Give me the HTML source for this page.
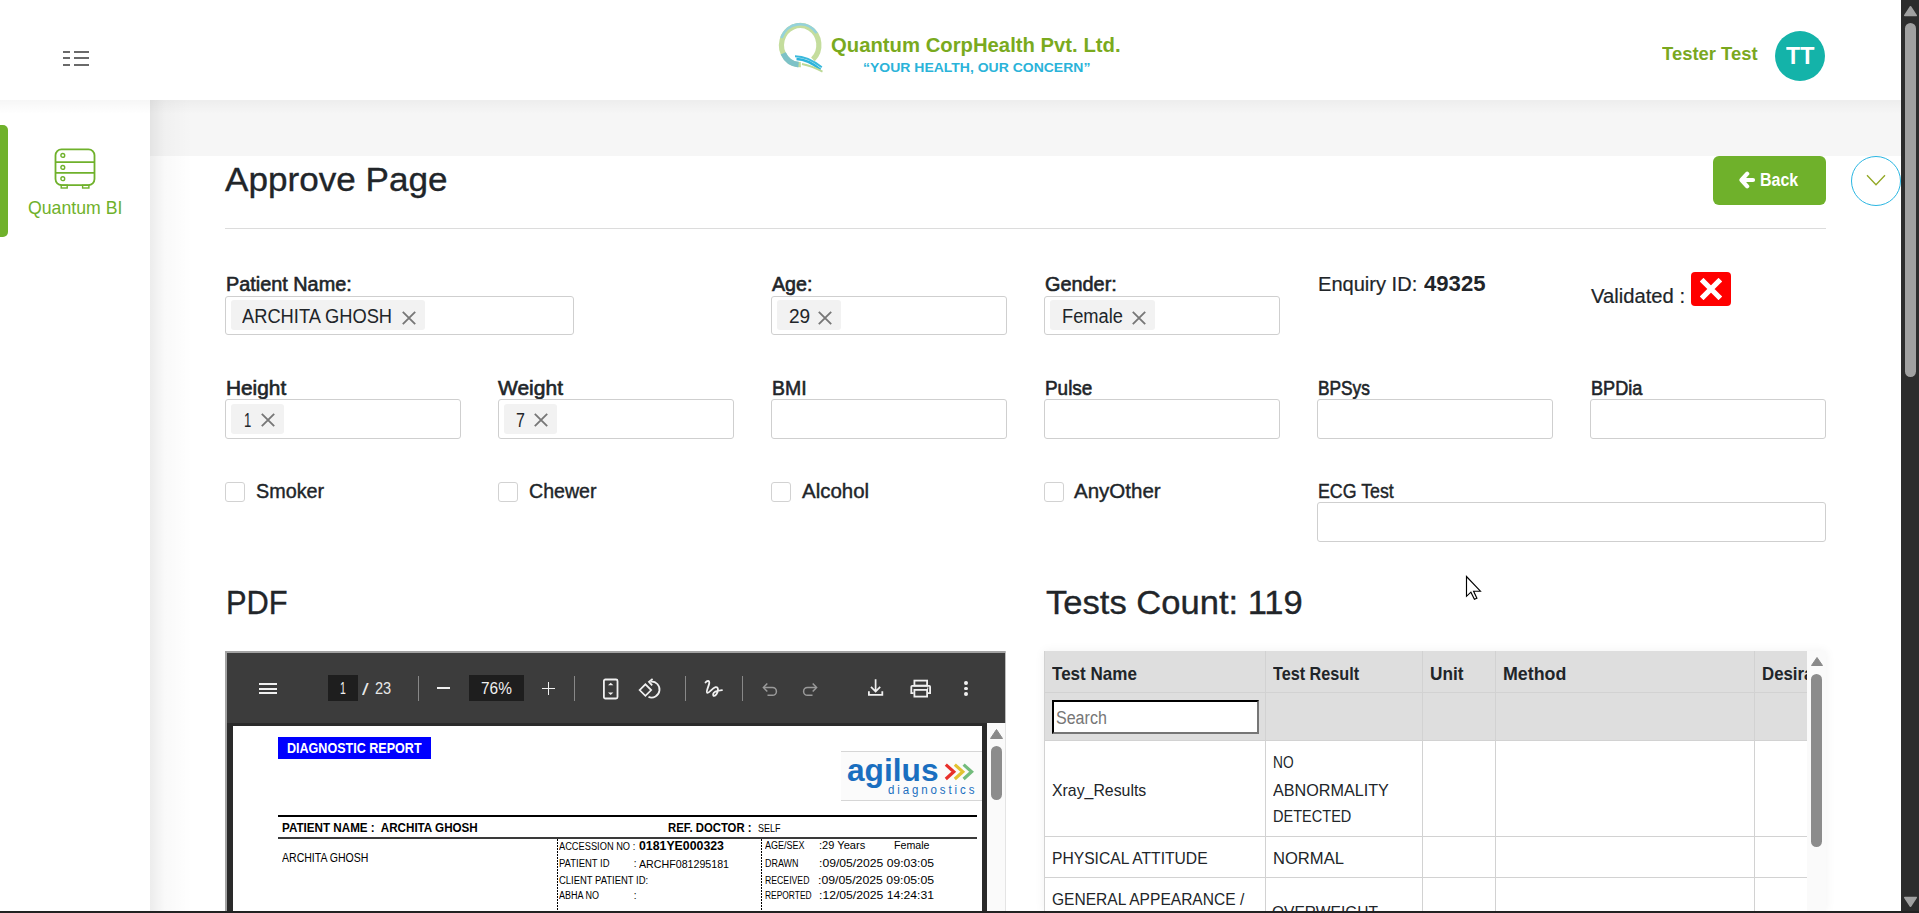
<!DOCTYPE html>
<html><head><meta charset="utf-8"><title>Approve Page</title>
<style>
html,body{margin:0;padding:0;width:1919px;height:913px;overflow:hidden;background:#fff;}
body{position:relative;font-family:"Liberation Sans",sans-serif;}
.t{position:absolute;white-space:nowrap;transform-origin:0 0;font-family:"Liberation Sans",sans-serif;}
.b{position:absolute;display:block;}
</style></head><body>
<div class="b" style="left:150px;top:100px;width:1751px;height:56px;background:#f6f6f6;"></div>
<div class="b" style="left:150px;top:156px;width:1751px;height:755px;background:#fff;"></div>
<div class="b" style="left:0px;top:0px;width:1901px;height:100px;background:#fff;"></div>
<div class="b" style="left:63px;top:51px;width:7px;height:2px;background:#6a6a6a;"></div>
<div class="b" style="left:74px;top:51px;width:15px;height:2px;background:#6a6a6a;"></div>
<div class="b" style="left:63px;top:57px;width:7px;height:2px;background:#6a6a6a;"></div>
<div class="b" style="left:74px;top:57px;width:15px;height:2px;background:#6a6a6a;"></div>
<div class="b" style="left:63px;top:64px;width:7px;height:2px;background:#6a6a6a;"></div>
<div class="b" style="left:74px;top:64px;width:15px;height:2px;background:#6a6a6a;"></div>
<svg class="b" style="left:774px;top:19px" width="56" height="58" viewBox="0 0 56 58">
<path d="M26.85 45.69 A18.70 19.60 0 1 1 38.95 40.43" fill="none" stroke="#c4dd9d" stroke-width="5.2"/>
<path d="M7.41 18.95 A20.00 20.90 0 0 1 42.58 14.11" fill="none" stroke="#94d2db" stroke-width="2.6"/>
<path d="M24.57 45.63 A18.70 19.60 0 0 1 9.25 34.38" fill="none" stroke="#7dc2c7" stroke-width="5.6"/>
<path d="M21 37.2 Q34 37.2 47.8 48.3" fill="none" stroke="#3ab9dc" stroke-width="1.9"/>
<path d="M22.5 40 Q34 40.3 46.5 50.6" fill="none" stroke="#2cb3da" stroke-width="2.3"/>
<path d="M28 45 Q38 47 48.5 52.6" fill="none" stroke="#bcd996" stroke-width="1.8"/>
</svg>
<div class="t" style="left:830.60px;top:34.6px;font-size:20px;line-height:20px;font-weight:bold;color:#7aaa1e;transform:scaleX(1.0140);">Quantum CorpHealth Pvt. Ltd.</div>
<div class="t" style="left:862.70px;top:61.2px;font-size:13px;line-height:13px;font-weight:bold;color:#2ab3d9;transform:scaleX(1.0758);">“YOUR HEALTH, OUR CONCERN”</div>
<div class="t" style="left:1661.70px;top:44.4px;font-size:19px;line-height:19px;font-weight:bold;color:#7aa81f;transform:scaleX(0.9697);">Tester Test</div>
<div class="b" style="left:1775px;top:31px;width:50px;height:50px;background:#14b3a9;border-radius:50%;"></div>
<div class="t" style="left:1785.50px;top:44.400000000000006px;font-size:24px;line-height:24px;font-weight:bold;color:#ffffff;transform:scaleX(0.9667);">TT</div>
<div class="b" style="left:0px;top:100px;width:150px;height:811px;background:#fff;"></div>
<div class="b" style="left:0px;top:125px;width:8px;height:112px;background:#6fb12b;border-radius:0 5px 5px 0;"></div>
<svg class="b" style="left:54px;top:148px" width="42" height="42" viewBox="0 0 42 42">
<rect x="1.5" y="1.3" width="39" height="35.8" rx="6" fill="none" stroke="#6fb12b" stroke-width="1.8"/>
<line x1="1.5" y1="14.1" x2="40.5" y2="14.1" stroke="#6fb12b" stroke-width="1.8"/>
<line x1="1.5" y1="24.8" x2="40.5" y2="24.8" stroke="#6fb12b" stroke-width="1.8"/>
<circle cx="8.8" cy="7.4" r="1.9" fill="none" stroke="#6fb12b" stroke-width="1.4"/>
<circle cx="8.8" cy="19.4" r="1.9" fill="none" stroke="#6fb12b" stroke-width="1.4"/>
<circle cx="8.8" cy="30.7" r="1.9" fill="none" stroke="#6fb12b" stroke-width="1.4"/>
<rect x="7.2" y="37.2" width="6" height="2.8" fill="none" stroke="#6fb12b" stroke-width="1.4"/>
<rect x="28.6" y="37.2" width="6.3" height="2.8" fill="none" stroke="#6fb12b" stroke-width="1.4"/>
</svg>
<div class="t" style="left:28.00px;top:198px;font-size:19px;line-height:19px;font-weight:normal;color:#6fb12b;transform:scaleX(0.9307);">Quantum BI</div>
<div class="b" style="left:150px;top:100px;width:42px;height:811px;background:linear-gradient(90deg,rgba(0,0,0,0.075),rgba(0,0,0,0.025) 35%,rgba(0,0,0,0) 100%);"></div>
<div class="b" style="left:0px;top:100px;width:1901px;height:14px;background:linear-gradient(180deg,rgba(0,0,0,0.035),rgba(0,0,0,0));"></div>
<div class="t" style="left:225.40px;top:161.8px;font-size:34px;line-height:34px;font-weight:normal;color:#212529;transform:scaleX(1.0326);-webkit-text-stroke:0.35px #212529;">Approve Page</div>
<div class="b" style="left:225px;top:228px;width:1601px;height:1px;background:#dcdcdc;"></div>
<div class="b" style="left:1713px;top:156px;width:113px;height:49px;background:#6fb12b;border-radius:6px;"></div>
<svg class="b" style="left:1737px;top:171px" width="20" height="18" viewBox="0 0 20 18">
<path d="M10.2 2.7 L4.5 9 L10.2 15.3 M5 9 H16" fill="none" stroke="#fff" stroke-width="4.2" stroke-linecap="round" stroke-linejoin="round"/></svg>
<div class="t" style="left:1760.30px;top:171.2px;font-size:18px;line-height:18px;font-weight:bold;color:#ffffff;transform:scaleX(0.8886);">Back</div>
<div class="b" style="left:1851px;top:156px;width:50px;height:50px;border:1px solid #2ab6e2;border-radius:50%;box-sizing:border-box;"></div>
<svg class="b" style="left:1864px;top:172px" width="24" height="16" viewBox="0 0 24 16">
<path d="M3 3.3 L12 12.8 L21 3.3" fill="none" stroke="#93a825" stroke-width="1.3"/></svg>
<div class="t" style="left:226.30px;top:273.9px;font-size:20px;line-height:20px;font-weight:normal;color:#212529;transform:scaleX(0.9921);-webkit-text-stroke:0.6px #212529;">Patient Name:</div>
<div class="t" style="left:771.70px;top:273.9px;font-size:20px;line-height:20px;font-weight:normal;color:#212529;transform:scaleX(0.9829);-webkit-text-stroke:0.6px #212529;">Age:</div>
<div class="t" style="left:1044.50px;top:273.9px;font-size:20px;line-height:20px;font-weight:normal;color:#212529;transform:scaleX(0.9931);-webkit-text-stroke:0.6px #212529;">Gender:</div>
<div class="t" style="left:1318.00px;top:273.9px;font-size:20px;line-height:20px;font-weight:normal;color:#212529;transform:scaleX(1.0030);-webkit-text-stroke:0.2px #212529;">Enquiry ID:</div>
<div class="t" style="left:1424.00px;top:272.9px;font-size:22px;line-height:22px;font-weight:bold;color:#212529;transform:scaleX(1.0049);">49325</div>
<div class="t" style="left:1591.20px;top:286.1px;font-size:20px;line-height:20px;font-weight:normal;color:#212529;transform:scaleX(1.0108);-webkit-text-stroke:0.2px #212529;">Validated :</div>
<div class="b" style="left:1691px;top:272px;width:40px;height:34px;background:#ff0000;border-radius:4px;"></div>
<svg class="b" style="left:1700px;top:278px" width="22" height="22" viewBox="0 0 22 22">
<path d="M3.5 3.5 L18.5 18.5 M18.5 3.5 L3.5 18.5" stroke="#fff" stroke-width="5.2" stroke-linecap="square"/></svg>
<div class="b" style="left:225px;top:296px;width:349px;height:39px;border:1px solid #cfcfcf;border-radius:3px;box-sizing:border-box;background:#fff;"></div>
<div class="b" style="left:771px;top:296px;width:236px;height:39px;border:1px solid #cfcfcf;border-radius:3px;box-sizing:border-box;background:#fff;"></div>
<div class="b" style="left:1044px;top:296px;width:236px;height:39px;border:1px solid #cfcfcf;border-radius:3px;box-sizing:border-box;background:#fff;"></div>
<div class="b" style="left:231px;top:300px;width:194px;height:30px;background:#f2f2f2;border-radius:3px;"></div>
<div class="t" style="left:242.40px;top:306px;font-size:20px;line-height:20px;font-weight:normal;color:#212529;transform:scaleX(0.9146);">ARCHITA GHOSH</div>
<svg class="b" style="left:402px;top:311px" width="14" height="14" viewBox="0 0 14 14"><path d="M0.8 0.8 L13.2 13.2 M13.2 0.8 L0.8 13.2" stroke="#777" stroke-width="1.85"/></svg>
<div class="b" style="left:777px;top:300px;width:64px;height:30px;background:#f2f2f2;border-radius:3px;"></div>
<div class="t" style="left:788.60px;top:306px;font-size:20px;line-height:20px;font-weight:normal;color:#212529;transform:scaleX(0.9545);">29</div>
<svg class="b" style="left:818px;top:311px" width="14" height="14" viewBox="0 0 14 14"><path d="M0.8 0.8 L13.2 13.2 M13.2 0.8 L0.8 13.2" stroke="#777" stroke-width="1.85"/></svg>
<div class="b" style="left:1050px;top:300px;width:105px;height:30px;background:#f2f2f2;border-radius:3px;"></div>
<div class="t" style="left:1062.00px;top:306px;font-size:20px;line-height:20px;font-weight:normal;color:#212529;transform:scaleX(0.9149);">Female</div>
<svg class="b" style="left:1132px;top:311px" width="14" height="14" viewBox="0 0 14 14"><path d="M0.8 0.8 L13.2 13.2 M13.2 0.8 L0.8 13.2" stroke="#777" stroke-width="1.85"/></svg>
<div class="t" style="left:225.70px;top:378px;font-size:20px;line-height:20px;font-weight:normal;color:#212529;transform:scaleX(1.0414);-webkit-text-stroke:0.6px #212529;">Height</div>
<div class="t" style="left:498.20px;top:378px;font-size:20px;line-height:20px;font-weight:normal;color:#212529;transform:scaleX(1.0500);-webkit-text-stroke:0.6px #212529;">Weight</div>
<div class="t" style="left:771.70px;top:378px;font-size:20px;line-height:20px;font-weight:normal;color:#212529;transform:scaleX(0.9722);-webkit-text-stroke:0.6px #212529;">BMI</div>
<div class="t" style="left:1044.50px;top:378px;font-size:20px;line-height:20px;font-weight:normal;color:#212529;transform:scaleX(0.9460);-webkit-text-stroke:0.6px #212529;">Pulse</div>
<div class="t" style="left:1318.10px;top:378px;font-size:20px;line-height:20px;font-weight:normal;color:#212529;transform:scaleX(0.8650);-webkit-text-stroke:0.6px #212529;">BPSys</div>
<div class="t" style="left:1591.20px;top:378px;font-size:20px;line-height:20px;font-weight:normal;color:#212529;transform:scaleX(0.9052);-webkit-text-stroke:0.6px #212529;">BPDia</div>
<div class="b" style="left:225px;top:399px;width:236px;height:40px;border:1px solid #cfcfcf;border-radius:3px;box-sizing:border-box;background:#fff;"></div>
<div class="b" style="left:498px;top:399px;width:236px;height:40px;border:1px solid #cfcfcf;border-radius:3px;box-sizing:border-box;background:#fff;"></div>
<div class="b" style="left:771px;top:399px;width:236px;height:40px;border:1px solid #cfcfcf;border-radius:3px;box-sizing:border-box;background:#fff;"></div>
<div class="b" style="left:1044px;top:399px;width:236px;height:40px;border:1px solid #cfcfcf;border-radius:3px;box-sizing:border-box;background:#fff;"></div>
<div class="b" style="left:1317px;top:399px;width:236px;height:40px;border:1px solid #cfcfcf;border-radius:3px;box-sizing:border-box;background:#fff;"></div>
<div class="b" style="left:1590px;top:399px;width:236px;height:40px;border:1px solid #cfcfcf;border-radius:3px;box-sizing:border-box;background:#fff;"></div>
<div class="b" style="left:231px;top:404px;width:53px;height:30px;background:#f2f2f2;border-radius:3px;"></div>
<div class="t" style="left:243.80px;top:409.5px;font-size:20px;line-height:20px;font-weight:normal;color:#212529;transform:scaleX(0.6545);">1</div>
<svg class="b" style="left:261px;top:413px" width="14" height="14" viewBox="0 0 14 14"><path d="M0.8 0.8 L13.2 13.2 M13.2 0.8 L0.8 13.2" stroke="#777" stroke-width="1.85"/></svg>
<div class="b" style="left:504px;top:404px;width:53px;height:30px;background:#f2f2f2;border-radius:3px;"></div>
<div class="t" style="left:515.70px;top:409.5px;font-size:20px;line-height:20px;font-weight:normal;color:#212529;transform:scaleX(0.8000);">7</div>
<svg class="b" style="left:534px;top:413px" width="14" height="14" viewBox="0 0 14 14"><path d="M0.8 0.8 L13.2 13.2 M13.2 0.8 L0.8 13.2" stroke="#777" stroke-width="1.85"/></svg>
<div class="b" style="left:225px;top:482px;width:20px;height:20px;border:1.5px solid #d2d2d2;border-radius:3px;box-sizing:border-box;"></div>
<div class="t" style="left:255.60px;top:480.7px;font-size:20px;line-height:20px;font-weight:normal;color:#212529;transform:scaleX(0.9884);-webkit-text-stroke:0.4px #212529;">Smoker</div>
<div class="b" style="left:498px;top:482px;width:20px;height:20px;border:1.5px solid #d2d2d2;border-radius:3px;box-sizing:border-box;"></div>
<div class="t" style="left:528.50px;top:480.7px;font-size:20px;line-height:20px;font-weight:normal;color:#212529;transform:scaleX(0.9783);-webkit-text-stroke:0.4px #212529;">Chewer</div>
<div class="b" style="left:771px;top:482px;width:20px;height:20px;border:1.5px solid #d2d2d2;border-radius:3px;box-sizing:border-box;"></div>
<div class="t" style="left:801.50px;top:480.7px;font-size:20px;line-height:20px;font-weight:normal;color:#212529;transform:scaleX(1.0227);-webkit-text-stroke:0.4px #212529;">Alcohol</div>
<div class="b" style="left:1044px;top:482px;width:20px;height:20px;border:1.5px solid #d2d2d2;border-radius:3px;box-sizing:border-box;"></div>
<div class="t" style="left:1074.20px;top:480.7px;font-size:20px;line-height:20px;font-weight:normal;color:#212529;transform:scaleX(1.0259);-webkit-text-stroke:0.4px #212529;">AnyOther</div>
<div class="t" style="left:1317.50px;top:481.3px;font-size:20px;line-height:20px;font-weight:normal;color:#212529;transform:scaleX(0.8895);-webkit-text-stroke:0.4px #212529;">ECG Test</div>
<div class="b" style="left:1317px;top:502px;width:509px;height:40px;border:1px solid #cfcfcf;border-radius:3px;box-sizing:border-box;background:#fff;"></div>
<div class="t" style="left:225.80px;top:584.8px;font-size:34px;line-height:34px;font-weight:normal;color:#212529;transform:scaleX(0.9074);-webkit-text-stroke:0.35px #212529;">PDF</div>
<div class="t" style="left:1045.50px;top:584.8px;font-size:34px;line-height:34px;font-weight:normal;color:#212529;transform:scaleX(1.0166);-webkit-text-stroke:0.35px #212529;">Tests Count: 119</div>
<svg class="b" style="left:1464px;top:574px" width="22" height="30" viewBox="0 0 22 30">
<path d="M2.5 2.5 L2.5 22.3 L6.9 18.2 L10.4 25.3 L12.9 24.2 L9.6 17.2 L16.4 17.2 Z" fill="#fff" stroke="#000" stroke-width="1.15" stroke-linejoin="miter"/></svg>
<div class="b" style="left:225px;top:651px;width:781px;height:260px;background:#2a2a2a;"></div>
<div class="b" style="left:225px;top:651px;width:781px;height:2px;background:#a3a3a3;"></div>
<div class="b" style="left:225px;top:651px;width:2px;height:260px;background:#a3a3a3;"></div>
<div class="b" style="left:1005px;top:651px;width:1px;height:72px;background:#bdbdbd;"></div>
<div class="b" style="left:227px;top:653px;width:778px;height:70px;background:#3c3c3c;"></div>
<div class="b" style="left:987px;top:723px;width:18px;height:188px;background:#fafafa;"></div>
<div class="b" style="left:1005px;top:723px;width:1px;height:188px;background:#e4e4e4;"></div>
<div class="b" style="left:258.6px;top:683px;width:18px;height:1.9px;background:#f0f0f0"></div>
<div class="b" style="left:258.6px;top:687.7px;width:18px;height:1.9px;background:#f0f0f0"></div>
<div class="b" style="left:258.6px;top:692.3px;width:18px;height:1.9px;background:#f0f0f0"></div>
<div class="b" style="left:328px;top:675px;width:30px;height:26px;background:#1e1e1e;"></div>
<div class="t" style="left:339.90px;top:681.2px;font-size:16px;line-height:16px;font-weight:normal;color:#f0f0f0;transform:scaleX(0.6556);">1</div>
<div class="t" style="left:361.80px;top:681.6px;font-size:16px;line-height:16px;font-weight:normal;color:#e8e8e8;transform:scaleX(1.4800);">/</div>
<div class="t" style="left:374.70px;top:681.2px;font-size:16px;line-height:16px;font-weight:normal;color:#e8e8e8;transform:scaleX(0.9111);">23</div>
<div class="b" style="left:418px;top:676px;width:1px;height:25px;background:#888;"></div>
<div class="b" style="left:437px;top:687.2px;width:13px;height:1.8px;background:#f0f0f0"></div>
<div class="b" style="left:469px;top:675px;width:55px;height:26px;background:#1e1e1e;"></div>
<div class="t" style="left:481.30px;top:681.2px;font-size:16px;line-height:16px;font-weight:normal;color:#f0f0f0;transform:scaleX(0.9625);">76%</div>
<div class="b" style="left:542px;top:687.6px;width:13px;height:1.8px;background:#f0f0f0"></div>
<div class="b" style="left:547.6px;top:682px;width:1.8px;height:13px;background:#f0f0f0"></div>
<div class="b" style="left:574px;top:676px;width:1px;height:25px;background:#888;"></div>
<svg class="b" style="left:602px;top:678px" width="18" height="22" viewBox="0 0 18 22"><rect x="1.9" y="1.5" width="13.6" height="19" rx="1.5" fill="none" stroke="#f0f0f0" stroke-width="1.8"/><path d="M6 7.2 L8.7 4.8 L11.4 7.2 Z M6 14.5 L8.7 17 L11.4 14.5 Z" fill="#f0f0f0"/></svg>
<svg class="b" style="left:638px;top:677px" width="24" height="24" viewBox="0 0 24 24"><path d="M1.6 13.1 L7.4 7.3 L13.2 13.1 L7.4 18.9 Z" fill="none" stroke="#f0f0f0" stroke-width="1.7"/><path d="M12.8 4.53 A8 8 0 1 1 10.5 19.9" fill="none" stroke="#f0f0f0" stroke-width="1.8"/><path d="M14.6 1.9 L11 4.9 L14.2 8.3" fill="none" stroke="#f0f0f0" stroke-width="1.8"/></svg>
<div class="b" style="left:685px;top:676px;width:1px;height:25px;background:#888;"></div>
<svg class="b" style="left:703px;top:678px" width="22" height="22" viewBox="0 0 22 22"><path d="M2.5 4.6 C4 2.4 6.8 2.2 6.2 5.5 C5.6 9 2.6 13.5 4.2 14.8 C5.8 16 9 10.2 12.5 9.2 C15.5 8.4 15.6 13 13.6 16 C12 18.4 9.8 18.6 10.2 16 C10.6 13.2 15 12.6 19 12.2" fill="none" stroke="#f0f0f0" stroke-width="1.8" stroke-linecap="round" stroke-linejoin="round"/></svg>
<div class="b" style="left:742px;top:676px;width:1px;height:25px;background:#888;"></div>
<svg class="b" style="left:761px;top:680px" width="20" height="18" viewBox="0 0 20 18"><path d="M3 7.5 H11.5 A3.9 3.9 0 0 1 11.5 15.3 H6.5" fill="none" stroke="#9a9a9a" stroke-width="1.5"/><path d="M6.3 3.4 L2.4 7.5 L6.3 11.6" fill="none" stroke="#9a9a9a" stroke-width="1.5"/></svg>
<svg class="b" style="left:799px;top:680px" width="20" height="18" viewBox="0 0 20 18"><path d="M17 7.5 H8.5 A3.9 3.9 0 0 0 8.5 15.3 H13.5" fill="none" stroke="#9a9a9a" stroke-width="1.5"/><path d="M13.7 3.4 L17.6 7.5 L13.7 11.6" fill="none" stroke="#9a9a9a" stroke-width="1.5"/></svg>
<svg class="b" style="left:866px;top:678px" width="20" height="20" viewBox="0 0 20 20"><path d="M9.6 1.2 V13.4 M5 8.9 L9.6 13.5 L14.2 8.9" fill="none" stroke="#f0f0f0" stroke-width="1.7"/><path d="M2.9 13.3 V16.9 H16.3 V13.3" fill="none" stroke="#f0f0f0" stroke-width="1.8"/></svg>
<svg class="b" style="left:909px;top:677px" width="24" height="22" viewBox="0 0 24 22"><rect x="5.4" y="3.6" width="12.7" height="5" fill="none" stroke="#f0f0f0" stroke-width="1.8"/><path d="M4.6 16.1 H2.3 V9.8 Q2.3 8.9 3.2 8.9 H20.2 Q21.1 8.9 21.1 9.8 V16.1 H18.8" fill="none" stroke="#f0f0f0" stroke-width="1.8"/><rect x="5.4" y="12.9" width="12.7" height="6.7" fill="none" stroke="#f0f0f0" stroke-width="1.8"/><rect x="18" y="10.5" width="1.3" height="1.3" fill="#f0f0f0"/></svg>
<div class="b" style="left:963.9px;top:680.9px;width:3.8px;height:3.8px;border-radius:50%;background:#f0f0f0"></div>
<div class="b" style="left:963.9px;top:686.7px;width:3.8px;height:3.8px;border-radius:50%;background:#f0f0f0"></div>
<div class="b" style="left:963.9px;top:692.4px;width:3.8px;height:3.8px;border-radius:50%;background:#f0f0f0"></div>
<svg class="b" style="left:989px;top:728px" width="16" height="12" viewBox="0 0 16 12"><path d="M1.5 10.5 L7.5 1.5 L13.5 10.5 Z" fill="#8a8a8a" stroke="#8a8a8a" stroke-width="1" stroke-linejoin="round"/></svg>
<div class="b" style="left:991px;top:746px;width:11px;height:54px;background:#8c8c8c;border-radius:6px;"></div>
<div class="b" style="left:233px;top:726px;width:749px;height:185px;background:#fff;"></div>
<div class="b" style="left:278px;top:737px;width:153px;height:22px;background:#0000ff;"></div>
<div class="t" style="left:286.90px;top:739.7px;font-size:15px;line-height:15px;font-weight:bold;color:#ffffff;transform:scaleX(0.8366);">DIAGNOSTIC REPORT</div>
<div class="b" style="left:841px;top:751px;width:141px;height:50px;background:#fbfbfb;"></div>
<div class="b" style="left:841px;top:751px;width:141px;height:1px;background:#d6d6d6;"></div>
<div class="b" style="left:841px;top:800px;width:141px;height:1px;background:#d6d6d6;"></div>
<div class="t" style="left:846.70px;top:754.4px;font-size:32px;line-height:32px;font-weight:bold;color:#1a6fc0;transform:scaleX(0.9902);">agilus</div>
<svg class="b" style="left:943px;top:762px" width="33" height="20" viewBox="0 0 33 20"><path d="M2.8 2.6 L10.8 9.8 L2.8 17" fill="none" stroke="#e8302a" stroke-width="3.2"/><path d="M11.8 2.6 L19.8 9.8 L11.8 17" fill="none" stroke="#e2c232" stroke-width="3.2"/><path d="M20.6 2.6 L28.6 9.8 L20.6 17" fill="none" stroke="#73bc7c" stroke-width="3.2"/></svg>
<div class="t" style="left:888.20px;top:784.4px;font-size:12px;line-height:12px;font-weight:normal;color:#1a6fc0;transform:scaleX(0.9600);letter-spacing:3px;">diagnostics</div>
<div class="b" style="left:278px;top:815px;width:699px;height:2px;background:#000;"></div>
<div class="t" style="left:282.20px;top:822.2px;font-size:12px;line-height:12px;font-weight:bold;color:#000;transform:scaleX(0.9703);white-space:pre;">PATIENT NAME :  ARCHITA GHOSH</div>
<div class="t" style="left:668.10px;top:822.2px;font-size:12px;line-height:12px;font-weight:bold;color:#000;transform:scaleX(0.9443);">REF. DOCTOR :</div>
<div class="t" style="left:757.60px;top:822.5px;font-size:11px;line-height:11px;font-weight:normal;color:#000;transform:scaleX(0.8179);">SELF</div>
<div class="b" style="left:278px;top:837px;width:699px;height:2px;background:#3a3a3a;"></div>
<div class="t" style="left:282.20px;top:852.2px;font-size:12px;line-height:12px;font-weight:normal;color:#000;transform:scaleX(0.8776);">ARCHITA GHOSH</div>
<div class="b" style="left:557px;top:839px;width:1px;height:72px;background:repeating-linear-gradient(180deg,#000 0 2px,transparent 2px 3px);"></div>
<div class="b" style="left:761px;top:839px;width:1px;height:72px;background:repeating-linear-gradient(180deg,#000 0 2px,transparent 2px 3px);"></div>
<div class="t" style="left:558.50px;top:841.5px;font-size:10px;line-height:10px;font-weight:normal;color:#000;transform:scaleX(0.9268);">ACCESSION NO :</div>
<div class="t" style="left:639.00px;top:839.6px;font-size:12px;line-height:12px;font-weight:bold;color:#000;transform:scaleX(1.0265);">0181YE000323</div>
<div class="t" style="left:558.50px;top:858.6px;font-size:10px;line-height:10px;font-weight:normal;color:#000;transform:scaleX(0.9472);">PATIENT ID</div>
<div class="t" style="left:633.80px;top:858.6px;font-size:10px;line-height:10px;font-weight:normal;color:#000;">:</div>
<div class="t" style="left:639.00px;top:859px;font-size:11px;line-height:11px;font-weight:normal;color:#000;transform:scaleX(0.9688);">ARCHF081295181</div>
<div class="t" style="left:558.50px;top:876.2px;font-size:10px;line-height:10px;font-weight:normal;color:#000;transform:scaleX(0.9457);">CLIENT PATIENT ID:</div>
<div class="t" style="left:558.50px;top:891.2px;font-size:10px;line-height:10px;font-weight:normal;color:#000;transform:scaleX(0.9000);">ABHA NO</div>
<div class="t" style="left:633.80px;top:891.2px;font-size:10px;line-height:10px;font-weight:normal;color:#000;">:</div>
<div class="t" style="left:765.00px;top:841px;font-size:10px;line-height:10px;font-weight:normal;color:#000;transform:scaleX(0.9000);">AGE/SEX</div>
<div class="t" style="left:818.70px;top:840px;font-size:11px;line-height:11px;font-weight:normal;color:#000;transform:scaleX(1.0065);">:29 Years</div>
<div class="t" style="left:893.50px;top:840px;font-size:11px;line-height:11px;font-weight:normal;color:#000;transform:scaleX(0.9676);">Female</div>
<div class="t" style="left:765.00px;top:858.6px;font-size:10px;line-height:10px;font-weight:normal;color:#000;transform:scaleX(0.8946);">DRAWN</div>
<div class="t" style="left:818.70px;top:857.6px;font-size:11px;line-height:11px;font-weight:normal;color:#000;transform:scaleX(1.1058);">:09/05/2025 09:03:05</div>
<div class="t" style="left:765.00px;top:876.2px;font-size:10px;line-height:10px;font-weight:normal;color:#000;transform:scaleX(0.8686);">RECEIVED</div>
<div class="t" style="left:817.50px;top:875.2px;font-size:11px;line-height:11px;font-weight:normal;color:#000;transform:scaleX(1.1173);">:09/05/2025 09:05:05</div>
<div class="t" style="left:765.00px;top:891.2px;font-size:10px;line-height:10px;font-weight:normal;color:#000;transform:scaleX(0.8418);">REPORTED</div>
<div class="t" style="left:818.70px;top:890.2px;font-size:11px;line-height:11px;font-weight:normal;color:#000;transform:scaleX(1.1058);">:12/05/2025 14:24:31</div>
<div class="b" style="left:1044px;top:651px;width:782px;height:260px;box-shadow:0 0 10px rgba(0,0,0,0.06);background:#fff;"></div>
<div class="b" style="left:1044px;top:651px;width:763px;height:90px;background:#dedede;"></div>
<div class="b" style="left:1044px;top:651px;width:1px;height:260px;background:#d2d2d2;"></div>
<div class="b" style="left:1265px;top:651px;width:1px;height:260px;background:#d2d2d2;"></div>
<div class="b" style="left:1422px;top:651px;width:1px;height:260px;background:#d2d2d2;"></div>
<div class="b" style="left:1495px;top:651px;width:1px;height:260px;background:#d2d2d2;"></div>
<div class="b" style="left:1754px;top:651px;width:1px;height:260px;background:#d2d2d2;"></div>
<div class="b" style="left:1044px;top:692px;width:763px;height:1px;background:#d2d2d2;"></div>
<div class="b" style="left:1044px;top:740px;width:763px;height:1px;background:#d2d2d2;"></div>
<div class="b" style="left:1044px;top:836px;width:763px;height:1px;background:#d2d2d2;"></div>
<div class="b" style="left:1044px;top:877px;width:763px;height:1px;background:#d2d2d2;"></div>
<div class="t" style="left:1052.40px;top:663.8px;font-size:19px;line-height:19px;font-weight:bold;color:#212529;transform:scaleX(0.8968);">Test Name</div>
<div class="t" style="left:1272.70px;top:663.8px;font-size:19px;line-height:19px;font-weight:bold;color:#212529;transform:scaleX(0.8529);">Test Result</div>
<div class="t" style="left:1429.50px;top:663.8px;font-size:19px;line-height:19px;font-weight:bold;color:#212529;transform:scaleX(0.9053);">Unit</div>
<div class="t" style="left:1503.30px;top:663.8px;font-size:19px;line-height:19px;font-weight:bold;color:#212529;transform:scaleX(0.9368);">Method</div>
<div class="b" style="left:1754px;top:651px;width:53px;height:41px;overflow:hidden"><div class="t" style="left:8.30px;top:12.8px;font-size:19px;line-height:19px;font-weight:bold;color:#212529;transform:scaleX(0.8837);">Desirable</div></div>
<div class="b" style="left:1052px;top:700px;width:207px;height:34px;background:#fff;border-style:solid;border-width:2px;border-color:#000 #767676 #767676 #000;box-sizing:border-box;"></div>
<div class="t" style="left:1056.30px;top:708.75px;font-size:18px;line-height:18px;font-weight:normal;color:#767676;transform:scaleX(0.8912);">Search</div>
<div class="t" style="left:1052.40px;top:782px;font-size:17px;line-height:17px;font-weight:normal;color:#212529;transform:scaleX(0.9327);">Xray_Results</div>
<div class="t" style="left:1272.70px;top:754px;font-size:17px;line-height:17px;font-weight:normal;color:#212529;transform:scaleX(0.8077);">NO</div>
<div class="t" style="left:1272.70px;top:782px;font-size:17px;line-height:17px;font-weight:normal;color:#212529;transform:scaleX(0.9508);">ABNORMALITY</div>
<div class="t" style="left:1272.70px;top:808.4px;font-size:17px;line-height:17px;font-weight:normal;color:#212529;transform:scaleX(0.8554);">DETECTED</div>
<div class="t" style="left:1052.40px;top:849.6px;font-size:17px;line-height:17px;font-weight:normal;color:#212529;transform:scaleX(0.9201);">PHYSICAL ATTITUDE</div>
<div class="t" style="left:1272.70px;top:849.6px;font-size:17px;line-height:17px;font-weight:normal;color:#212529;transform:scaleX(0.9753);">NORMAL</div>
<div class="t" style="left:1052.40px;top:890.8px;font-size:17px;line-height:17px;font-weight:normal;color:#212529;transform:scaleX(0.9152);">GENERAL APPEARANCE /</div>
<div class="t" style="left:1272.30px;top:904px;font-size:17px;line-height:17px;font-weight:normal;color:#212529;transform:scaleX(0.9155);">OVERWEIGHT</div>
<div class="b" style="left:1807px;top:651px;width:19px;height:260px;background:#fafafa;"></div>
<svg class="b" style="left:1810px;top:656px" width="14" height="11" viewBox="0 0 14 11"><path d="M1.5 9.5 L7 1.5 L12.5 9.5 Z" fill="#8a8a8a" stroke="#8a8a8a" stroke-width="1" stroke-linejoin="round"/></svg>
<div class="b" style="left:1811px;top:674px;width:11px;height:173px;background:#8c8c8c;border-radius:6px;"></div>
<div class="b" style="left:1901px;top:0px;width:18px;height:913px;background:#2c2c2c;"></div>
<svg class="b" style="left:1903px;top:5px" width="15" height="12" viewBox="0 0 15 12"><path d="M1.8 10.5 L7.5 1.8 L13.2 10.5 Z" fill="#a0a0a0" stroke="#a0a0a0" stroke-width="1.6" stroke-linejoin="round"/></svg>
<div class="b" style="left:1905px;top:23px;width:11px;height:354px;background:#a0a0a0;border-radius:6px;"></div>
<svg class="b" style="left:1903px;top:896px" width="15" height="12" viewBox="0 0 15 12"><path d="M1.8 1.5 L7.5 10.2 L13.2 1.5 Z" fill="#a0a0a0" stroke="#a0a0a0" stroke-width="1.6" stroke-linejoin="round"/></svg>
<div class="b" style="left:0px;top:911px;width:1919px;height:2px;background:#222;"></div>
</body></html>
